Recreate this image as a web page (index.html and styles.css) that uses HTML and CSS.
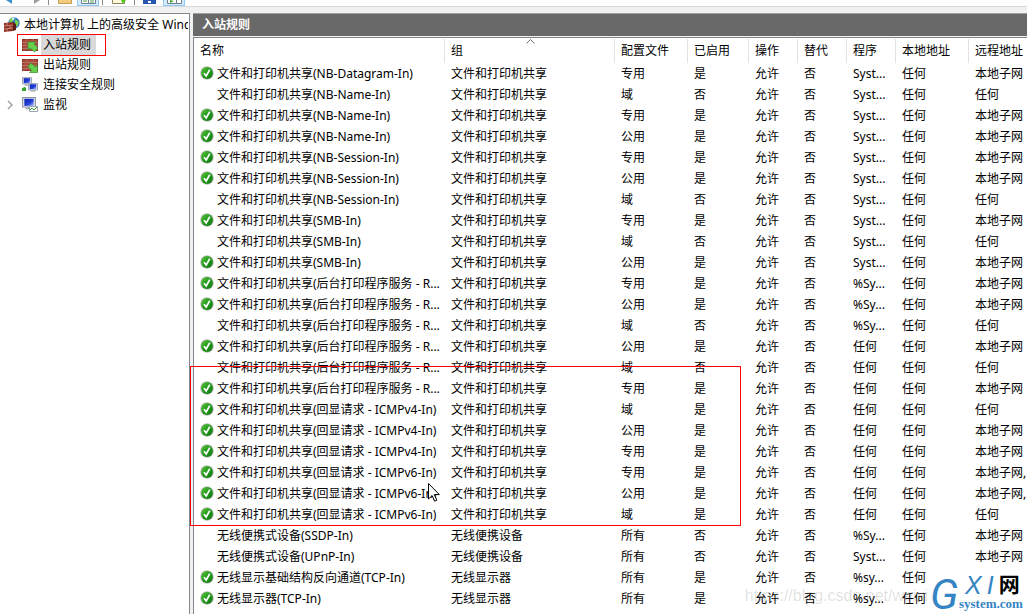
FILE: index.html
```
<!DOCTYPE html>
<html lang="zh-CN">
<head>
<meta charset="utf-8">
<title>高级安全 Windows 防火墙</title>
<link rel="stylesheet" href="styles.css">
</head>
<body>
<svg class="defs" aria-hidden="true">
  <defs>
    <linearGradient id="green" x1="0" y1="0" x2="1" y2="1"><stop offset="0" stop-color="#5cc23c"/><stop offset=".5" stop-color="#239a1c"/><stop offset="1" stop-color="#0f7410"/></linearGradient>
    <linearGradient id="screen" x1="0" y1="0" x2="1" y2="1"><stop offset="0" stop-color="#0a1fb4"/><stop offset=".6" stop-color="#2440d8"/><stop offset="1" stop-color="#a9c4ff"/></linearGradient>
    <symbol id="ok" viewBox="0 0 14 14"><circle cx="7" cy="7" r="6.8" fill="#b9bdb9"/><circle cx="7" cy="7" r="5.9" fill="url(#green)"/><path d="M4 7.3l2.2 2.6L9.8 3.6" fill="none" stroke="#fff" stroke-width="1.7"/></symbol>
    <symbol id="bricks" viewBox="0 0 16 12"><path d="M0 0h16v12H0z" fill="#8d3427"/><path d="M1 1h3v2H1zM6 1h4v2H6zM12 1h3v2h-3zM3 4h4v2H3zM9 4h4v2H9zM1 7h3v2H1zM6 7h4v2H6zM12 7h3v2h-3zM3 10h4v1H3zM9 10h4v1H9z" fill="#b04a39"/><path d="M0 3.5h16M0 6.500h16M0 9.500h16M5 0v3M11 0v3M2 4v2M8 4v2M14 4v2M5 7v2M11 7v2M2 10v2M8 10v2" stroke="#cf9a8d" stroke-width=".6"/></symbol>
    <symbol id="pc" viewBox="0 0 12 11"><path d="M.5.500h11v8H.5z" fill="#e6e9ee" stroke="#8e98a8"/><path d="M2 1.500h8v6H2z" fill="url(#screen)"/><path d="M3 9h6v1.500H3z" fill="#9ba4b0"/></symbol>
  </defs>
</svg>
<div class="app">
  <div class="toolbar">
    <button class="tool back" aria-label="后退"><svg viewBox="0 0 20 7"><path d="M5 0h6v4z" fill="#3f8fcb"/></svg></button>
    <button class="tool" aria-label="前进"><svg viewBox="0 0 20 7"><path d="M10 0h6l-6 4z" fill="#9b9b9b"/></svg></button>
    <span class="divider"></span>
    <button class="tool" aria-label="上一级"><svg viewBox="0 0 20 7"><path d="M2.500-1h13v4.500h-13z" fill="#f0cd7e" stroke="#c79b4b"/></svg></button>
    <button class="tool active" aria-label="显示树"><svg viewBox="0 0 20 7"><path d="M3.500-1h14v4.500h-14zM10.500-1v4" fill="#fff" stroke="#6f7f8f"/><path d="M5 1h4M12 0h4M12 2h4" stroke="#4aa04a"/></svg></button>
    <span class="divider"></span>
    <button class="tool" aria-label="导出"><svg viewBox="0 0 20 7"><path d="M2.500-1h12v4.500h-12z" fill="#fff8dc" stroke="#8f8360"/><path d="M11 0h5l-3 4z" fill="#55c321"/></svg></button>
    <span class="divider"></span>
    <button class="tool" aria-label="帮助"><svg viewBox="0 0 20 7"><path d="M1 0h13v4H1z" fill="#2856b0"/><path d="M6 1h3v2H6z" fill="#fff"/></svg></button>
    <button class="tool active" aria-label="操作窗格"><svg viewBox="0 0 20 7"><path d="M3.500-1h14v4.500h-14zM12.500-1v4" fill="#fff" stroke="#6f7f8f"/><path d="M6 0l4 1-4 2z" fill="#42a832"/></svg></button>
  </div>
  <div class="panes">
    <nav class="tree" aria-label="控制台树">
      <a class="node root" href="#root"><svg class="icon" viewBox="0 0 16 16"><circle cx="10" cy="6" r="5.700" fill="#2474c4"/><path d="M6 2q3-2 4 0L8 5 5 6zM11 2l4 3-2 5-2-3z" fill="#7cd04a"/><path d="M8 1q2-1 3 0L9 4z" fill="#d9f1ff"/><path d="M0 6l9-1v9l-9 1z" fill="#8f3326"/><path d="M0 9l9-1M0 12l9-1M3 6v3M6 9v3M3 12v3" stroke="#d8988a" stroke-width=".8"/><path d="M9 5l3 2v6l-3 1z" fill="#5d2019"/></svg><span>本地计算机 上的高级安全 Windows 防火墙</span></a>
      <a class="node" href="#in"><svg class="icon" viewBox="0 0 16 16"><use href="#bricks" y="2" width="16" height="12"/><path d="M6 5h8l-2 2 4 4-3.500 4-4.500-4-2 2z" fill="#67cf4b" stroke="#2f8d25" stroke-width=".7"/></svg><span class="selected">入站规则</span></a>
      <a class="node" href="#out"><svg class="icon" viewBox="0 0 16 16"><use href="#bricks" y="2" width="16" height="12"/><path d="M15.500 15.500h-8l2-2-3.500-4L9 6l4.500 4 2-2z" fill="#67cf4b" stroke="#2f8d25" stroke-width=".7"/></svg><span>出站规则</span></a>
      <a class="node" href="#sec"><svg class="icon" viewBox="0 0 16 16"><use href="#pc" width="10" height="9"/><use href="#pc" x="6" y="6" width="10" height="9"/><path d="M0 14v-3h1q1-2 3 0v3z" fill="#35a52c"/></svg><span>连接安全规则</span></a>
      <a class="node" href="#mon"><svg class="chevron" viewBox="0 0 6 10"><path d="M1 1l4 4-4 4" fill="none" stroke="#a0a0a0" stroke-width="1.500"/></svg><svg class="icon" viewBox="0 0 16 16"><use href="#pc" width="14" height="13"/><path d="M7.500 9.500h8v5h-8z" fill="#fff" stroke="#9aa6b0"/><path d="M8 13l2-2 2 2 3-3" fill="none" stroke="#35a52c"/></svg><span>监视</span></a>
      <span class="mark tree-mark"></span>
    </nav>
    <main class="content">
      <h1 class="title">入站规则</h1>
      <div class="list">
        <table class="rules">
          <colgroup><col class="c-name"><col class="c-group"><col class="c-wide"><col class="c-mid"><col class="c-slim"><col class="c-slim"><col class="c-slim"><col class="c-wide"><col></colgroup>
          <thead><tr><th>名称</th><th class="sorted">组<svg class="sort" viewBox="0 0 9 5"><path d="M.5 4.500l4-4 4 4" fill="none" stroke="#707070"/></svg></th><th>配置文件</th><th>已启用</th><th>操作</th><th>替代</th><th>程序</th><th>本地地址</th><th>远程地址</th></tr></thead>
          <tbody>
            <tr><td><svg class="ok"><use href="#ok"/></svg>文件和打印机共享(NB-Datagram-In)</td><td>文件和打印机共享</td><td>专用</td><td>是</td><td>允许</td><td>否</td><td>Syst...</td><td>任何</td><td>本地子网</td></tr>
            <tr><td><svg class="ok"></svg>文件和打印机共享(NB-Name-In)</td><td>文件和打印机共享</td><td>域</td><td>否</td><td>允许</td><td>否</td><td>Syst...</td><td>任何</td><td>任何</td></tr>
            <tr><td><svg class="ok"><use href="#ok"/></svg>文件和打印机共享(NB-Name-In)</td><td>文件和打印机共享</td><td>专用</td><td>是</td><td>允许</td><td>否</td><td>Syst...</td><td>任何</td><td>本地子网</td></tr>
            <tr><td><svg class="ok"><use href="#ok"/></svg>文件和打印机共享(NB-Name-In)</td><td>文件和打印机共享</td><td>公用</td><td>是</td><td>允许</td><td>否</td><td>Syst...</td><td>任何</td><td>本地子网</td></tr>
            <tr><td><svg class="ok"><use href="#ok"/></svg>文件和打印机共享(NB-Session-In)</td><td>文件和打印机共享</td><td>专用</td><td>是</td><td>允许</td><td>否</td><td>Syst...</td><td>任何</td><td>本地子网</td></tr>
            <tr><td><svg class="ok"><use href="#ok"/></svg>文件和打印机共享(NB-Session-In)</td><td>文件和打印机共享</td><td>公用</td><td>是</td><td>允许</td><td>否</td><td>Syst...</td><td>任何</td><td>本地子网</td></tr>
            <tr><td><svg class="ok"></svg>文件和打印机共享(NB-Session-In)</td><td>文件和打印机共享</td><td>域</td><td>否</td><td>允许</td><td>否</td><td>Syst...</td><td>任何</td><td>任何</td></tr>
            <tr><td><svg class="ok"><use href="#ok"/></svg>文件和打印机共享(SMB-In)</td><td>文件和打印机共享</td><td>专用</td><td>是</td><td>允许</td><td>否</td><td>Syst...</td><td>任何</td><td>本地子网</td></tr>
            <tr><td><svg class="ok"></svg>文件和打印机共享(SMB-In)</td><td>文件和打印机共享</td><td>域</td><td>否</td><td>允许</td><td>否</td><td>Syst...</td><td>任何</td><td>任何</td></tr>
            <tr><td><svg class="ok"><use href="#ok"/></svg>文件和打印机共享(SMB-In)</td><td>文件和打印机共享</td><td>公用</td><td>是</td><td>允许</td><td>否</td><td>Syst...</td><td>任何</td><td>本地子网</td></tr>
            <tr><td><svg class="ok"><use href="#ok"/></svg>文件和打印机共享(后台打印程序服务 - R...</td><td>文件和打印机共享</td><td>专用</td><td>是</td><td>允许</td><td>否</td><td>%Sy...</td><td>任何</td><td>本地子网</td></tr>
            <tr><td><svg class="ok"><use href="#ok"/></svg>文件和打印机共享(后台打印程序服务 - R...</td><td>文件和打印机共享</td><td>公用</td><td>是</td><td>允许</td><td>否</td><td>%Sy...</td><td>任何</td><td>本地子网</td></tr>
            <tr><td><svg class="ok"></svg>文件和打印机共享(后台打印程序服务 - R...</td><td>文件和打印机共享</td><td>域</td><td>否</td><td>允许</td><td>否</td><td>%Sy...</td><td>任何</td><td>任何</td></tr>
            <tr><td><svg class="ok"><use href="#ok"/></svg>文件和打印机共享(后台打印程序服务 - R...</td><td>文件和打印机共享</td><td>公用</td><td>是</td><td>允许</td><td>否</td><td>任何</td><td>任何</td><td>本地子网</td></tr>
            <tr><td><svg class="ok"></svg>文件和打印机共享(后台打印程序服务 - R...</td><td>文件和打印机共享</td><td>域</td><td>否</td><td>允许</td><td>否</td><td>任何</td><td>任何</td><td>任何</td></tr>
            <tr><td><svg class="ok"><use href="#ok"/></svg>文件和打印机共享(后台打印程序服务 - R...</td><td>文件和打印机共享</td><td>专用</td><td>是</td><td>允许</td><td>否</td><td>任何</td><td>任何</td><td>本地子网</td></tr>
            <tr><td><svg class="ok"><use href="#ok"/></svg>文件和打印机共享(回显请求 - ICMPv4-In)</td><td>文件和打印机共享</td><td>域</td><td>是</td><td>允许</td><td>否</td><td>任何</td><td>任何</td><td>任何</td></tr>
            <tr><td><svg class="ok"><use href="#ok"/></svg>文件和打印机共享(回显请求 - ICMPv4-In)</td><td>文件和打印机共享</td><td>公用</td><td>是</td><td>允许</td><td>否</td><td>任何</td><td>任何</td><td>本地子网</td></tr>
            <tr><td><svg class="ok"><use href="#ok"/></svg>文件和打印机共享(回显请求 - ICMPv4-In)</td><td>文件和打印机共享</td><td>专用</td><td>是</td><td>允许</td><td>否</td><td>任何</td><td>任何</td><td>本地子网</td></tr>
            <tr><td><svg class="ok"><use href="#ok"/></svg>文件和打印机共享(回显请求 - ICMPv6-In)</td><td>文件和打印机共享</td><td>专用</td><td>是</td><td>允许</td><td>否</td><td>任何</td><td>任何</td><td>本地子网,...</td></tr>
            <tr><td><svg class="ok"><use href="#ok"/></svg>文件和打印机共享(回显请求 - ICMPv6-In)</td><td>文件和打印机共享</td><td>公用</td><td>是</td><td>允许</td><td>否</td><td>任何</td><td>任何</td><td>本地子网,...</td></tr>
            <tr><td><svg class="ok"><use href="#ok"/></svg>文件和打印机共享(回显请求 - ICMPv6-In)</td><td>文件和打印机共享</td><td>域</td><td>是</td><td>允许</td><td>否</td><td>任何</td><td>任何</td><td>任何</td></tr>
            <tr><td><svg class="ok"></svg>无线便携式设备(SSDP-In)</td><td>无线便携设备</td><td>所有</td><td>否</td><td>允许</td><td>否</td><td>%Sy...</td><td>任何</td><td>本地子网</td></tr>
            <tr><td><svg class="ok"></svg>无线便携式设备(UPnP-In)</td><td>无线便携设备</td><td>所有</td><td>否</td><td>允许</td><td>否</td><td>Syst...</td><td>任何</td><td>本地子网</td></tr>
            <tr><td><svg class="ok"><use href="#ok"/></svg>无线显示基础结构反向通道(TCP-In)</td><td>无线显示器</td><td>所有</td><td>是</td><td>允许</td><td>否</td><td>%sy...</td><td>任何</td><td></td></tr>
            <tr><td><svg class="ok"><use href="#ok"/></svg>无线显示器(TCP-In)</td><td>无线显示器</td><td>所有</td><td>是</td><td>允许</td><td>否</td><td>%sy...</td><td>任何</td><td></td></tr>
          </tbody>
        </table>
        <span class="mark list-mark"></span>
        <svg class="cursor" viewBox="0 0 12 19"><path d="M.5.500v15.500l3.600-3.500 2.500 5.700 2.200-1-2.500-5.600h5z" fill="#fff" stroke="#000"/></svg>
      </div>
    </main>
  </div>
  <div class="watermark">https://blog.csdn.net/weixi</div>
  <div class="logo"><span class="logo-g">G</span><div class="logo-side"><div class="logo-top"><i>X</i><i>I</i><b>网</b></div><div class="logo-bottom">system.com</div></div></div>
</div>
</body>
</html>
```
FILE: styles.css
```
* { box-sizing: border-box; }
body { margin: 0; background: #f0f0f0; color: #000; font: 12px/20px "Noto Sans", "Noto Sans CJK SC", sans-serif; }
.defs { position: absolute; width: 0; height: 0; }
.app { position: relative; display: flex; flex-direction: column; height: 100vh; overflow: hidden; }
.toolbar { display: flex; flex: none; height: 7px; background: #fff; border-bottom: 1px solid #d9d9d9; overflow: hidden; }
.tool { flex: none; width: 22px; height: 6px; padding: 0; border: 1px solid transparent; border-top: 0; background: none; }
.tool.back { margin-right: 1px; }
.tool svg { display: block; width: 20px; height: 7px; }
.tool.active { background: #d5ebfb; border-color: #91c9f7; }
.divider { flex: none; width: 1px; height: 5px; margin: 0 6px 0 3px; background: #8a8a8a; }
.panes { display: flex; flex: 1; min-height: 0; gap: 3px; padding-top: 6px; }
.tree { position: relative; flex: none; width: 190px; padding-top: 1px; background: #fff; border-top: 1px solid #828790; border-right: 1px solid #828790; }
.node { display: flex; align-items: center; height: 20px; padding-left: 22px; gap: 3px; color: #000; text-decoration: none; white-space: nowrap; overflow: hidden; }
.node.root { padding-left: 4px; margin-right: 1px; gap: 2px; }
.node span { padding: 0 2px; }
.icon { flex: none; width: 16px; height: 16px; }
.chevron { flex: none; width: 6px; height: 10px; margin: 0 6px 0 -15px; }
.selected { background: #d9d9d9; }
.node .selected { padding-right: 5px; }
.mark { position: absolute; border: 1px solid #f00; pointer-events: none; }
.tree-mark { left: 17px; top: 20px; width: 89px; height: 22px; }
.content { display: flex; flex: 1; flex-direction: column; min-width: 0; }
.title { margin: 0 0 1px; padding-left: 9px; height: 23px; background: #696969; border-top: 1px solid #a0a0a0; color: #fff; font-size: 12px; line-height: 22px; }
.list { position: relative; flex: 1; background: #fff; border-top: 1px solid #828790; border-left: 1px solid #828790; }
.rules { width: 100%; table-layout: fixed; border-collapse: collapse; }
.rules th, .rules td { height: 21px; padding: 0 0 0 6px; font-weight: normal; text-align: left; line-height: 20px; white-space: nowrap; overflow: hidden; }
.rules th { position: relative; height: 25px; background: linear-gradient(#e2e2e2, #e2e2e2) right 0 top 1px / 1px 24px no-repeat; }
.rules th:last-child { background: none; }
.c-name { width: 251px; }
.c-group { width: 170px; }
.c-wide { width: 73px; }
.c-mid { width: 61px; }
.c-slim { width: 49px; }
.ok { width: 14px; height: 14px; margin-right: 3px; vertical-align: -2px; }
.sort { position: absolute; left: 81px; top: 1px; width: 9px; height: 5px; }
.list-mark { left: -4px; top: 328px; width: 551px; height: 160px; }
.cursor { position: absolute; left: 234px; top: 445px; width: 12px; height: 19px; }
.watermark { position: absolute; right: 99px; bottom: 8px; color: #0002; font: 16px/20px "Liberation Sans", sans-serif; }
.logo { position: absolute; right: 0; bottom: 0; display: flex; width: 97px; height: 43px; padding-top: 3px; background: #fff; color: #3584c4; overflow: hidden; }
.logo-g { width: 29px; font: italic 43px/40px Roboto, sans-serif; }
.logo-side { flex: 1; }
.logo-top { display: flex; gap: 5px; height: 22px; padding-left: 6px; font: 25px/22px "Liberation Sans", "Noto Sans CJK SC", sans-serif; }
.logo-top b { color: #000; font-size: 21px; }
.logo-bottom { font: bold 13px/16px "Liberation Serif", serif; }
```
